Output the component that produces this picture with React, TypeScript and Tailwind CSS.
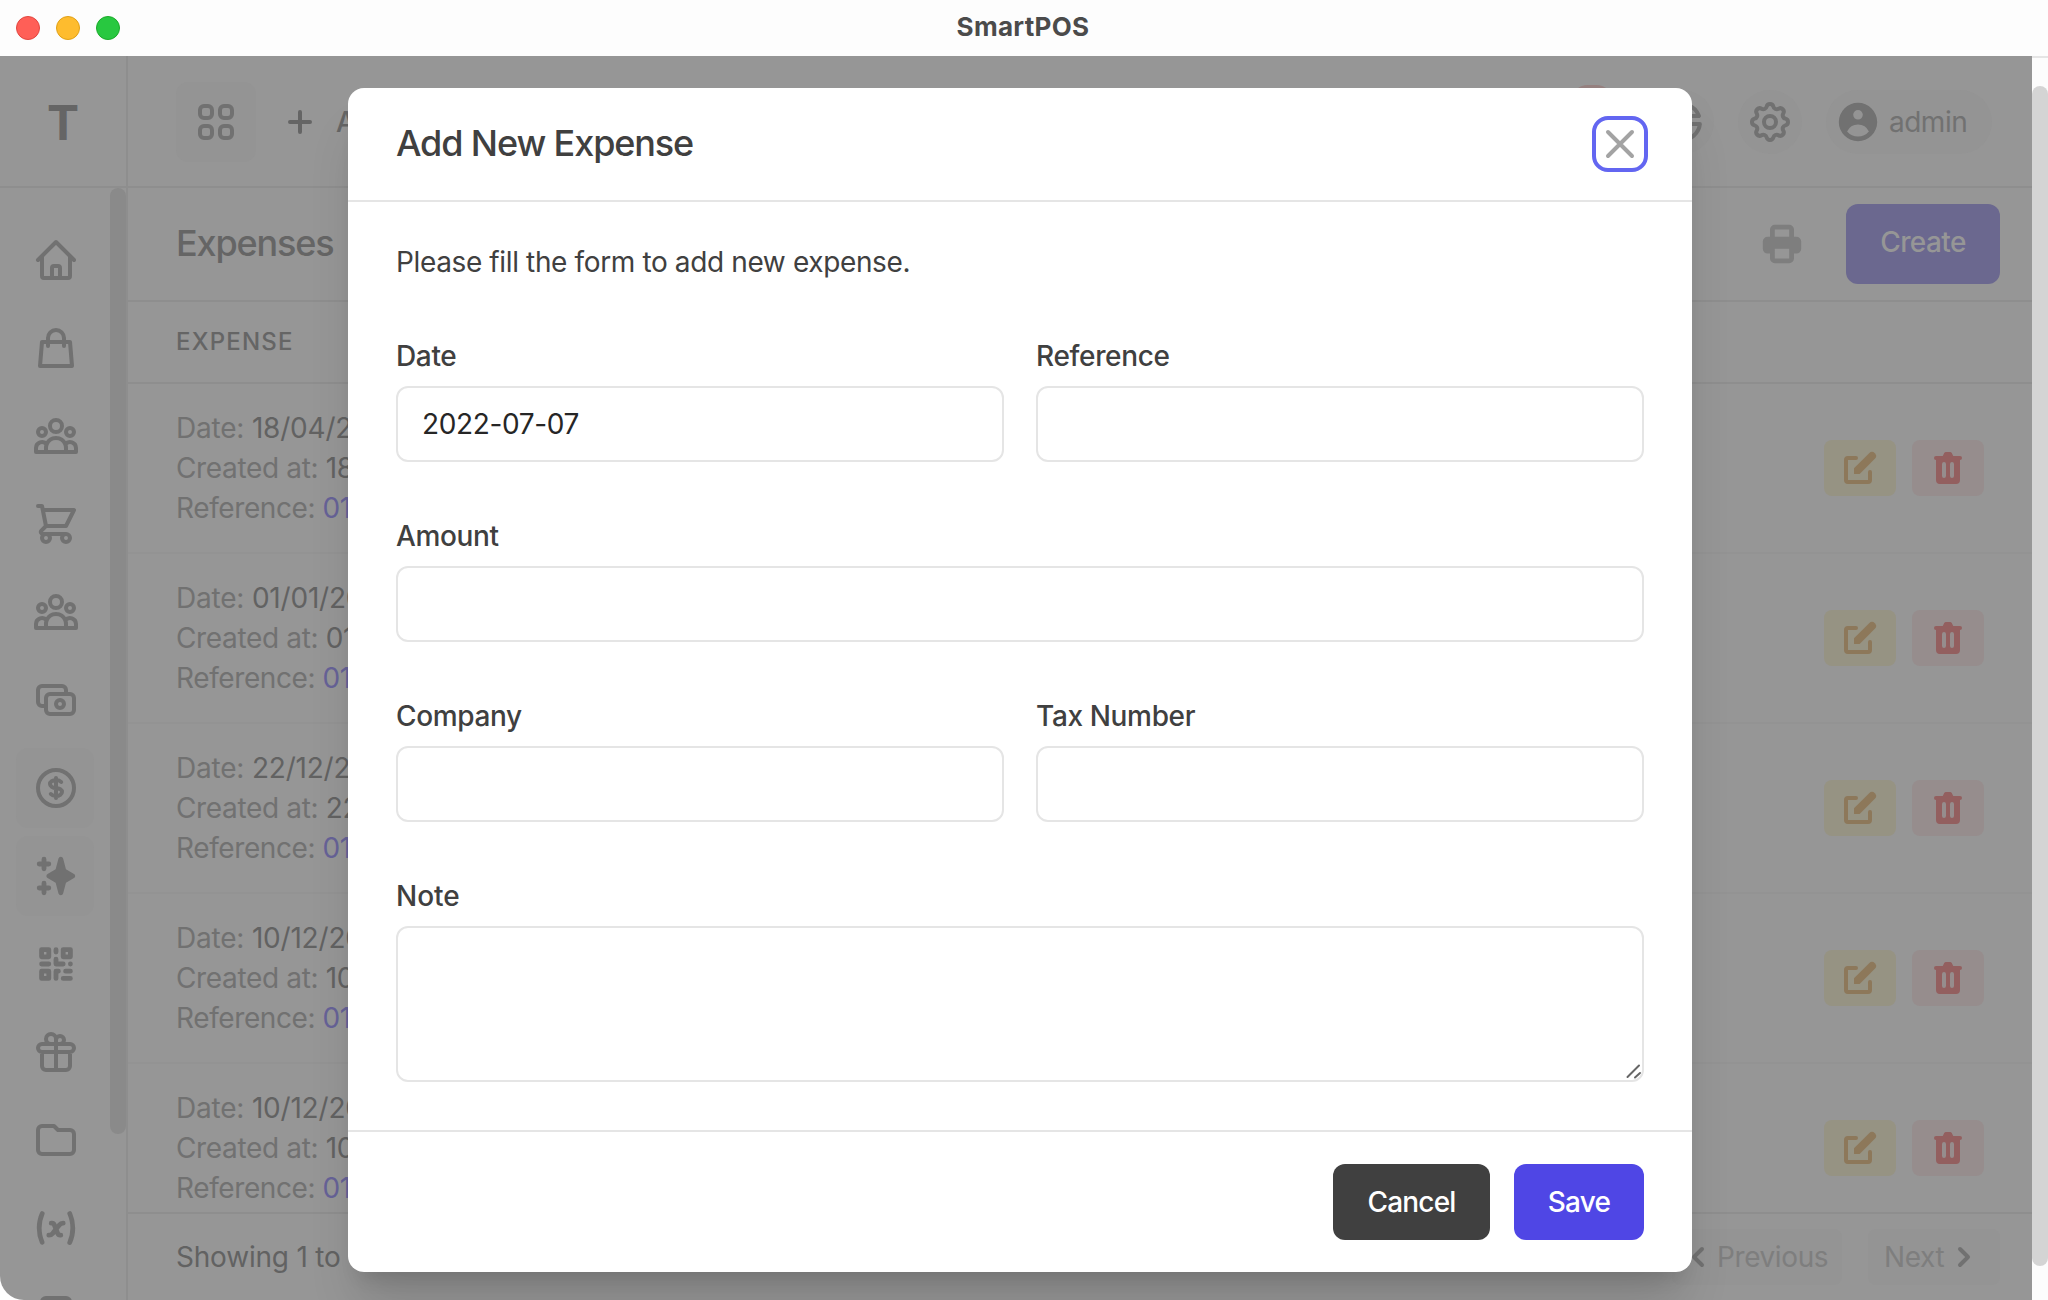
import React from "react";
import {
  HiChevronLeft,
  HiChevronRight,
  HiOutlineCash,
  HiOutlineChartPie,
  HiOutlineCog,
  HiOutlineCurrencyDollar,
  HiOutlineFolder,
  HiOutlineGift,
  HiOutlineHome,
  HiOutlineOfficeBuilding,
  HiOutlineShoppingBag,
  HiOutlineShoppingCart,
  HiOutlineUserGroup,
  HiOutlineViewGrid,
  HiOutlineX,
  HiPencilAlt,
  HiPrinter,
  HiQrcode,
  HiSparkles,
  HiTrash,
  HiUserCircle,
  HiVariable,
} from "react-icons/hi";

const navItems = [
  { Icon: HiOutlineHome, shaded: false },
  { Icon: HiOutlineShoppingBag, shaded: false },
  { Icon: HiOutlineUserGroup, shaded: false },
  { Icon: HiOutlineShoppingCart, shaded: false },
  { Icon: HiOutlineUserGroup, shaded: false },
  { Icon: HiOutlineCash, shaded: false },
  { Icon: HiOutlineCurrencyDollar, shaded: true },
  { Icon: HiSparkles, shaded: true },
  { Icon: HiQrcode, shaded: false },
  { Icon: HiOutlineGift, shaded: false },
  { Icon: HiOutlineFolder, shaded: false },
  { Icon: HiVariable, shaded: false },
  { Icon: HiOutlineOfficeBuilding, shaded: false },
];

const dates = ["18/04/2022", "01/01/2022", "22/12/2021", "10/12/2021", "10/12/2021"];

function TitleBar() {
  return (
    <div className="relative flex h-14 shrink-0 items-center justify-center bg-[#fdfdfd]">
      <div className="absolute left-4 top-4 flex gap-4">
        <span className="size-6 rounded-full border border-[#e2463f] bg-[#ff5f57]" />
        <span className="size-6 rounded-full border border-[#e1a116] bg-[#febc2e]" />
        <span className="size-6 rounded-full border border-[#1aab29] bg-[#28c840]" />
      </div>
      <span className="pb-0.5 pr-0.5 text-[26px] font-bold leading-8 tracking-[0.3px] text-[#4b4b4b]">SmartPOS</span>
    </div>
  );
}

function Sidebar() {
  return (
    <aside className="flex w-32 shrink-0 flex-col border-r-2 border-[#8e8e8e]">
      <div className="flex h-[132px] shrink-0 items-center justify-center border-b-2 border-[#8e8e8e] pt-[3px] text-5xl font-bold text-[#656565]">
        T
      </div>
      <div className="flex min-h-0 flex-1 overflow-hidden">
        <nav className="flex w-[110px] flex-col gap-2 px-4 pt-8">
          {navItems.map(({ Icon, shaded }, i) => (
            <div
              key={i}
              className={`flex h-20 shrink-0 items-center rounded-xl pl-4 text-[#717171] ${shaded ? "bg-[#949494]" : ""}`}
            >
              <Icon className="size-12 shrink-0" />
            </div>
          ))}
        </nav>
        <div className="h-[946px] w-4 rounded-full bg-[#8a8a8a]" />
      </div>
    </aside>
  );
}

function Header() {
  return (
    <header className="flex h-[132px] shrink-0 items-center justify-between border-b-2 border-[#8e8e8e] pl-12 pr-10 pt-0.5">
      <div className="flex items-center gap-6">
        <div className="flex size-20 items-center justify-center rounded-xl bg-[#949494] text-[#717171]">
          <HiOutlineViewGrid className="size-12" />
        </div>
        <div className="flex items-center gap-4 text-[28px] font-medium text-[#656565]">
          <svg viewBox="0 0 40 40" className="size-10" stroke="currentColor" strokeWidth="4" strokeLinecap="round">
            <path d="M20 10v20M10 20h20" />
          </svg>
          <span>Add</span>
        </div>
      </div>
      <div className="flex items-center gap-6 text-[#717171]">
        <div className="relative flex size-16 items-center justify-center">
          <span className="absolute -top-[5px] left-2 h-9 w-11 rounded-full bg-[#95807f]" />
        </div>
        <div className="flex size-16 items-center justify-center rounded-full bg-[#949494]">
          <HiOutlineChartPie className="size-12" />
        </div>
        <div className="flex size-16 items-center justify-center rounded-full bg-[#949494]">
          <HiOutlineCog className="size-12" />
        </div>
        <div className="flex h-16 w-[166px] items-center gap-2 rounded-full bg-[#949494] pl-2 text-[28px] tracking-[-0.5px]">
          <HiUserCircle className="size-12" />
          <span className="-ml-px">admin</span>
        </div>
      </div>
    </header>
  );
}

function ExpenseRow({ date }: { date: string }) {
  return (
    <div className="flex h-[170px] shrink-0 items-start justify-between border-b-2 border-[#939393] py-6 pl-12 pr-12 text-[28px] leading-10 tracking-[-0.35px] text-[#717171]">
      <div>
        <div className="tracking-[-0.2px]">
          Date: <span className="text-[#626262]">{date}</span>
        </div>
        <div>
          Created at: <span className="text-[#626262]">{date}</span>
        </div>
        <div className="tracking-[-0.4px]">
          Reference: <span className="text-[#666297]">01G3</span>
        </div>
      </div>
      <div className="flex gap-4 pt-8">
        <span className="flex h-14 w-[72px] items-center justify-center rounded-lg bg-[#969383] text-[#8d785a]">
          <HiPencilAlt className="size-10" />
        </span>
        <span className="flex h-14 w-[72px] items-center justify-center rounded-lg bg-[#968d8d] text-[#935f5f]">
          <HiTrash className="size-10" />
        </span>
      </div>
    </div>
  );
}

function Content() {
  return (
    <main className="flex min-h-0 flex-1 flex-col">
      <div className="flex h-[114px] shrink-0 items-center justify-between border-b-2 border-[#8e8e8e] pl-12 pr-8">
        <h1 className="pb-0.5 text-4xl font-medium tracking-[-1.15px] text-[#656565]">Expenses</h1>
        <div className="flex items-center gap-10">
          <HiPrinter className="size-12 text-[#7e7e7e]" />
          <span className="flex h-20 w-[154px] items-center justify-center rounded-xl bg-[#6b688f] pb-1 text-[28px] font-medium tracking-[-0.6px] text-[#969696]">
            Create
          </span>
        </div>
      </div>
      <div className="flex h-[82px] shrink-0 items-center border-b-2 border-[#8e8e8e] pl-12 text-2xl font-medium tracking-wider text-[#656565]">
        EXPENSE
      </div>
      <div className="flex min-h-0 flex-1 flex-col overflow-hidden">
        {dates.map((d, i) => (
          <ExpenseRow key={i} date={d} />
        ))}
      </div>
      <footer className="flex h-[88px] shrink-0 items-center justify-between border-t-2 border-[#8e8e8e] pl-12 pr-8 text-[28px] tracking-[-0.4px]">
        <span className="tracking-[-0.2px] text-[#626262]">Showing 1 to 5 of 5</span>
        <div className="flex gap-[26px] text-[#7e7e7e]">
          <span className="flex h-14 w-[170px] items-center rounded-lg bg-[#949494] pl-1.5">
            <HiChevronLeft className="size-10 text-[#717171]" />
            <span className="-ml-px">Previous</span>
          </span>
          <span className="flex h-14 w-[132px] items-center rounded-lg bg-[#949494] pl-4">
            <span>Next</span>
            <HiChevronRight className="size-10 text-[#717171]" />
          </span>
        </div>
      </footer>
    </main>
  );
}

function Field({ label, value = "" }: { label: string; value?: string }) {
  return (
    <label className="flex flex-1 flex-col">
      <span className="h-[50px] text-[28px] font-medium leading-10 tracking-[-0.35px]">{label}</span>
      <input
        readOnly
        value={value}
        className="h-[76px] w-full rounded-xl border-2 border-[#e5e5e5] bg-white px-6 text-[28px] tracking-[-0.35px] text-[#262626] outline-none"
      />
    </label>
  );
}

function ExpenseDialog() {
  return (
    <section className="absolute left-[348px] top-[88px] flex h-[1184px] w-[1344px] flex-col rounded-2xl bg-white text-[#404040] shadow-[0_40px_50px_-10px_rgba(0,0,0,0.14),0_16px_20px_-12px_rgba(0,0,0,0.14)]">
      <div className="flex h-[114px] shrink-0 items-center justify-between border-b-2 border-[#e5e5e5] pl-12 pr-11">
        <h2 className="pb-0.5 text-4xl font-medium tracking-[-1.12px]">Add New Expense</h2>
        <button className="flex size-14 items-center justify-center rounded-2xl border-4 border-[#6366f1] text-[#a3a3a3]">
          <HiOutlineX className="size-12 shrink-0" />
        </button>
      </div>
      <div className="flex flex-1 flex-col px-12 pt-10">
        <p className="text-[28px] leading-10 tracking-[-0.37px]">Please fill the form to add new expense.</p>
        <div className="mt-[54px] flex flex-col gap-[54px]">
          <div className="flex gap-8">
            <Field label="Date" value="2022-07-07" />
            <Field label="Reference" />
          </div>
          <Field label="Amount" />
          <div className="flex gap-8">
            <Field label="Company" />
            <Field label="Tax Number" />
          </div>
          <div className="flex flex-col">
            <span className="h-[50px] text-[28px] font-medium leading-10">Note</span>
            <div className="flex h-[156px] items-end justify-end rounded-xl border-2 border-[#e5e5e5]">
              <svg viewBox="0 0 18 18" className="size-[18px]" stroke="#666" strokeWidth="2" strokeLinecap="round">
                <path d="M3.5 15 15 3.5M11 15.5l5-4.5" />
              </svg>
            </div>
          </div>
        </div>
      </div>
      <div className="flex h-[142px] shrink-0 items-center justify-end gap-6 border-t-2 border-[#e5e5e5] px-12 text-[28px] font-medium tracking-[-0.8px] text-white">
        <button className="h-[76px] w-[157px] rounded-xl bg-[#404040]">Cancel</button>
        <button className="h-[76px] w-[130px] rounded-xl bg-[#4f46e5]">Save</button>
      </div>
    </section>
  );
}

export default function App() {
  return (
    <div className="relative flex h-[1300px] w-[2048px] flex-col overflow-hidden bg-white font-['Inter',sans-serif]">
      <TitleBar />
      <div className="flex min-h-0 flex-1">
        <div className="relative flex min-h-0 flex-1 overflow-hidden rounded-bl-3xl bg-[#969696]">
          <Sidebar />
          <div className="flex min-h-0 min-w-0 flex-1 flex-col">
            <Header />
            <Content />
          </div>
        </div>
        <div className="w-4 shrink-0 border-t-2 border-[#e5e5e5] bg-[#fcfcfc] pt-7">
          <div className="h-[1180px] w-4 rounded-full bg-[#d4d4d4]" />
        </div>
      </div>
      <ExpenseDialog />
    </div>
  );
}
